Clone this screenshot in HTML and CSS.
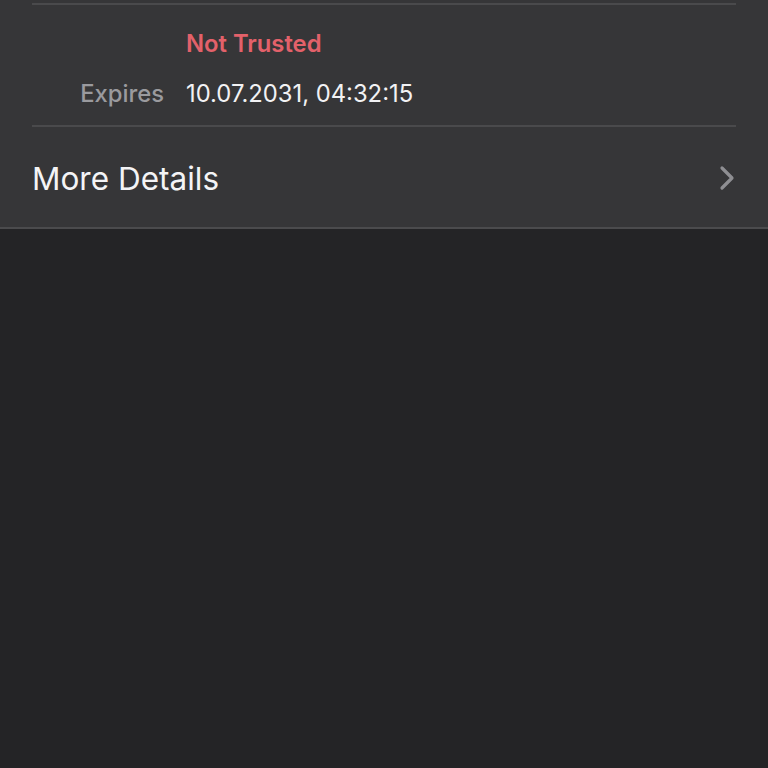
FILE: index.html
```html
<!DOCTYPE html>
<html>
<head>
<meta charset="utf-8">
<link rel="stylesheet" href="styles.css">
</head>
<body>
<div class="panel">
  <div class="inset">
    <div class="sep"></div>
    <div class="rows">
      <div class="row"><span class="label"></span><span class="value danger">Not Trusted</span></div>
      <div class="row"><span class="label">Expires</span><span class="value">10.07.2031, 04:32:15</span></div>
    </div>
    <div class="sep"></div>
  </div>
  <div class="more">
    <span class="more-text">More Details</span>
    <svg class="chevron" width="16" height="26" viewBox="0 0 16 26"><path d="M3 3 L13 13 L3 23" fill="none" stroke="#8e8e92" stroke-width="3.2" stroke-linecap="round" stroke-linejoin="round"/></svg>
  </div>
</div>
</body>
</html>
```
FILE: styles.css
```css
html, body { margin: 0; padding: 0; }
body {
  background: #242426;
  font-family: Inter, "Noto Sans", sans-serif;
  width: 768px;
  height: 768px;
  overflow: hidden;
}
.panel {
  background: #363638;
  border-bottom: 2px solid #4b4b4d;
}
.inset {
  padding: 3px 32px 0 32px;
}
.sep {
  height: 2px;
  background: #4a4a4c;
}
.rows {
  padding: 13px 0 7px 0;
}
.row {
  display: flex;
  align-items: center;
  height: 50px;
  gap: 22px;
  font-size: 23.8px;
}
.label {
  width: 132px;
  text-align: right;
  color: #9a9a9e;
  font-weight: 500;
}
.value {
  color: #f2f2f4;
}
.danger {
  color: #e3616a;
  font-weight: 600;
}
.more {
  display: flex;
  align-items: center;
  justify-content: space-between;
  height: 100px;
  padding: 0 32px;
}
.more-text {
  color: #f4f4f6;
  font-size: 31.5px;
  padding-top: 3px;
}
.chevron {
  display: block;
  margin-right: 1px;
  margin-top: 2px;
}
```
